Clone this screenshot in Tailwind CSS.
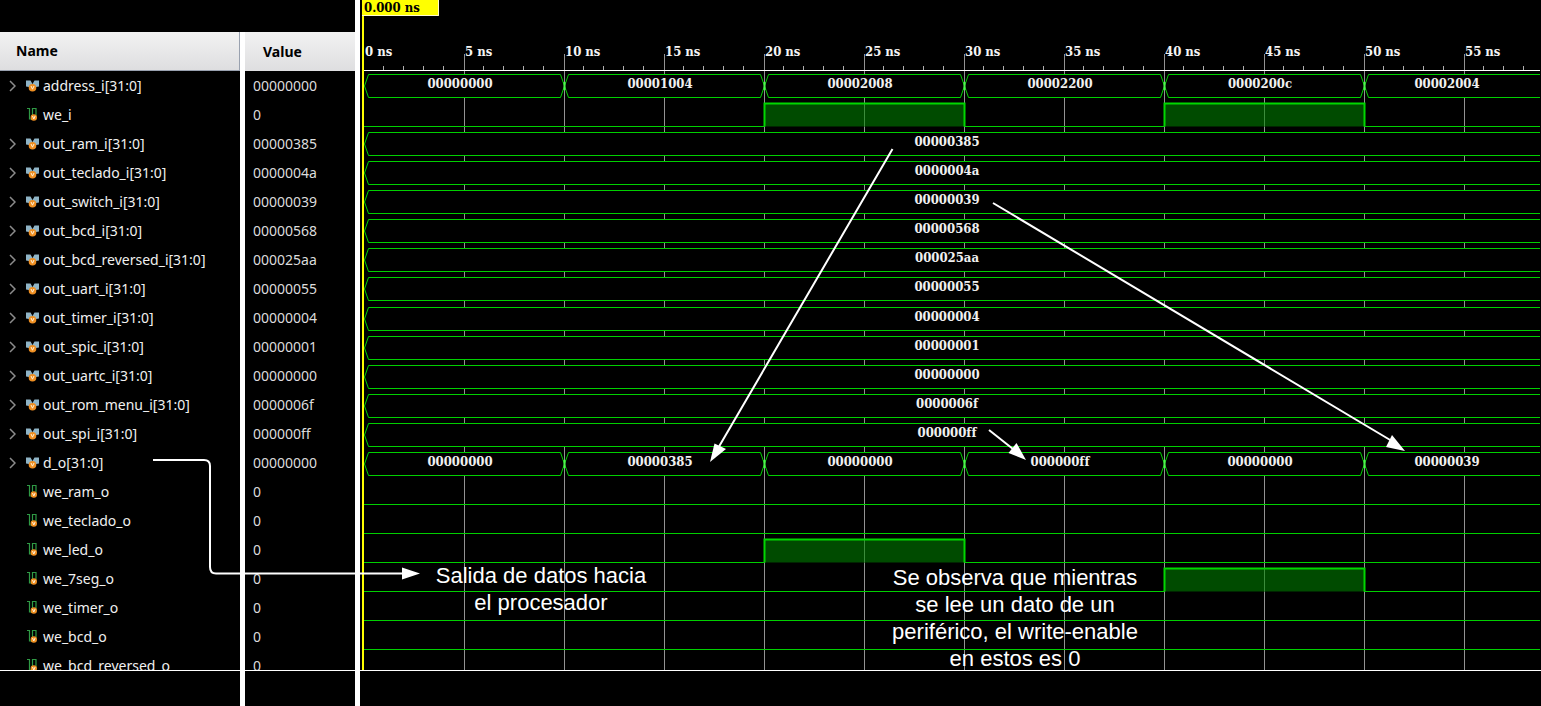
<!DOCTYPE html>
<html lang="es">
<head>
<meta charset="utf-8">
<meta name="viewport" content="width=device-width, initial-scale=1">
<title>Waveform</title>
<script src="https://cdn.jsdelivr.net/npm/@tailwindcss/browser@4"></script>
</head>
<body class="bg-black text-white">
<svg class="hidden" aria-hidden="true">
  <symbol id="i-bus" viewBox="0 0 14 12">
    <path d="M0 .5h4.500L6.500 4V7H3L0 6.500zM13 .5H8.500L6.500 4V7H10l3-.5z" fill="#8fb4c6"/>
    <circle cx="6.500" cy="7.700" r="3.800" fill="#ef8f22"/>
    <path d="M5 6l1.500 3.200L8 6" fill="none" stroke="#fff3da" stroke-width="1"/>
  </symbol>
  <symbol id="i-bit" viewBox="0 0 14 13">
    <path d="M1 .5h2.500v10.500h3M6.500 8V.5h3.500v7" fill="none" stroke="#2f9a45" stroke-width="1.200"/>
    <circle cx="7.800" cy="9.500" r="3.200" fill="#ef8f22"/>
    <path d="M6.500 8l1.300 3L9.100 8" fill="none" stroke="#fff3da" stroke-width="1"/>
  </symbol>
</svg>

<main class="relative flex h-screen min-h-[706px] flex-col overflow-hidden">
  <div class="flex h-[671px] border-b border-white">
    <section class="w-[360px] shrink-0 overflow-hidden border-r-[5px] border-white pt-8 font-['Noto_Sans','Open_Sans',sans-serif]">
      <table class="w-full table-fixed border-separate border-spacing-0 text-sm">
        <thead>
          <tr class="h-[39px] text-left text-black">
            <th scope="col" class="w-[240px] border-r border-b border-gray-400 bg-linear-to-b from-[#f2f2f2] to-[#dedee0] p-0 pl-4 font-bold">Name</th>
            <th scope="col" class="border-l-[5px] border-white bg-linear-to-b from-[#f2f2f2] to-[#dedee0] p-0 pl-[18px] font-bold">Value</th>
          </tr>
        </thead>
        <tbody id="signals"></tbody>
      </table>
    </section>
    <section class="relative min-w-0 flex-1 overflow-hidden">
      <svg id="wave" class="block h-full w-full text-[13px] font-bold font-['DejaVu_Serif_Condensed','DejaVu_Serif',serif]" role="img" aria-label="Formas de onda"></svg>
    </section>
  </div>
  <div class="flex flex-1">
    <div class="w-[240px]"></div>
    <div class="w-[120px] border-x-[5px] border-white"></div>
  </div>

  <svg class="pointer-events-none absolute inset-0 h-full w-full" fill="none" stroke="#fff" stroke-width="2" aria-hidden="true">
    <path d="M153 460H204Q210 460 210 466V567Q210 573.500 216 573.500H403"/>
    <path d="M892.500 149L717 450M993 203L1391 440.500M989 430L1013 449"/>
    <g fill="#fff" stroke="none">
      <path d="M402 567.500L420 573.500L402 579.500z"/>
      <path d="M710 462L714.500 443.500L726 449z"/>
      <path d="M1405 451L1386 447L1392 435z"/>
      <path d="M1026 460L1008.500 453L1016.500 443z"/>
    </g>
  </svg>
  <p class="absolute top-[562px] left-[421px] w-60 text-center text-[22px] leading-[27px] font-['Liberation_Sans',sans-serif]">Salida de datos hacia<br>el procesador</p>
  <p class="absolute top-[564px] left-[885px] w-[260px] text-center text-[22px] leading-[27px] font-['Liberation_Sans',sans-serif]">Se observa que mientras<br>se lee un dato de un<br>periférico, el write-enable<br>en estos es 0</p>
</main>

<script>
const signals = [
  ['address_i[31:0]', '00000000', ['00000000', '00001004', '00002008', '00002200', '0000200c', '00002004']],
  ['we_i', '0', [2, 4]],
  ['out_ram_i[31:0]', '00000385', ['00000385']],
  ['out_teclado_i[31:0]', '0000004a', ['0000004a']],
  ['out_switch_i[31:0]', '00000039', ['00000039']],
  ['out_bcd_i[31:0]', '00000568', ['00000568']],
  ['out_bcd_reversed_i[31:0]', '000025aa', ['000025aa']],
  ['out_uart_i[31:0]', '00000055', ['00000055']],
  ['out_timer_i[31:0]', '00000004', ['00000004']],
  ['out_spic_i[31:0]', '00000001', ['00000001']],
  ['out_uartc_i[31:0]', '00000000', ['00000000']],
  ['out_rom_menu_i[31:0]', '0000006f', ['0000006f']],
  ['out_spi_i[31:0]', '000000ff', ['000000ff']],
  ['d_o[31:0]', '00000000', ['00000000', '00000385', '00000000', '000000ff', '00000000', '00000039']],
  ['we_ram_o', '0', []],
  ['we_teclado_o', '0', []],
  ['we_led_o', '0', [2]],
  ['we_7seg_o', '0', [4]],
  ['we_timer_o', '0', []],
  ['we_bcd_o', '0', []],
  ['we_bcd_reversed_o', '0', []],
];
const isBus = s => s[0].includes('[');

document.getElementById('signals').innerHTML = signals.map(s => `
  <tr class="h-[29px] text-[#f0f0f0]">
    <td class="p-0"><div class="flex h-[29px] items-center">
      ${isBus(s)
        ? `<button type="button" aria-label="Expandir ${s[0]}" class="ml-2 flex w-[18px] shrink-0"><svg class="h-3 w-2" viewBox="0 0 8 12" fill="none" stroke="#8c8c8c" stroke-width="1.500"><path d="M2 1l5 5-5 5"/></svg></button><svg class="h-3 w-[14px] shrink-0"><use href="#i-bus"/></svg>`
        : `<span class="ml-2 w-[18px] shrink-0"></span><svg class="h-[13px] w-[14px] shrink-0"><use href="#i-bit"/></svg>`}
      <span class="ml-[3px] whitespace-nowrap">${s[0]}</span></div></td>
    <td class="border-l-[5px] border-white p-0 pl-2 text-[#dcdcdc]">${s[1]}</td>
  </tr>`).join('');

const wave = document.getElementById('wave');
const START = 4, STEP = 100;
function draw() {
  const W = wave.getBoundingClientRect().width, end = W - 1;
  let grid = '', o = '';
  for (let x = START, k = 0; x < end; x += 20, k++) {
    if (k % 5) grid += `<path d="M${x - .5} 66v4" stroke="#b0b0b0"/>`;
    else {
      if (k) grid += `<path d="M${x + .5} 54V670" stroke="#929292"/>`;
      grid += `<text x="${x + 1}" y="56" fill="#f4f4f4">${k} ns</text>`;
    }
  }
  o += `<path d="M${START} 70.5H${end}" stroke="#fff"/>`;
  signals.forEach((s, i) => {
    const t = Math.round(74 + i * 29.07) + .5, b = t + 23, m = t + 11.5;
    if (isBus(s)) {
      s[2].forEach((v, n) => {
        const x0 = START + .5 + n * 2 * STEP, last = n === s[2].length - 1;
        const x1 = last ? end : x0 + 2 * STEP;
        const right = last ? `H${end}V${b}` : `H${x1 - 4}L${x1} ${m}L${x1 - 4} ${b}`;
        o += `<path d="M${x0} ${m}L${x0 + 4} ${t}${right}H${x0 + 4}z" fill="#000"/>`;
        o += last
          ? `<path d="M${end} ${t}H${x0 + 4}L${x0} ${m}L${x0 + 4} ${b}H${end}" fill="none" stroke="#00d000"/>`
          : `<path d="M${x0} ${m}L${x0 + 4} ${t}${right}H${x0 + 4}z" fill="none" stroke="#00d000"/>`;
        if (n) o += `<path d="M${x0} ${m - 4}v8" stroke="#50f050" stroke-width="2"/>`;
        o += `<text x="${Math.round((x0 + x1) / 2) - 5}" y="${Math.round(t + 13)}" text-anchor="middle" fill="#f0f0f0">${v}</text>`;
      });
    } else if (b < 670) {
      let d = `M${START} ${b}`;
      s[2].forEach(n => {
        const x0 = START + .5 + n * 2 * STEP;
        o += `<rect x="${x0}" y="${t}" width="200" height="23" fill="#004b00"/><path d="M${x0 + 100} ${t}v23" stroke="#3c8c3c"/>`;
        o += `<path d="M${x0} ${b}V${t}h200V${b}" fill="none" stroke="#00d800" stroke-width="2"/>`;
        d += `H${x0}M${x0 + 200} ${b}`;
      });
      o += `<path d="${d}H${end}" stroke="#00d000"/>`;
    }
  });
  o += `<path d="M3 0V670" stroke="#ffff00" stroke-width="2"/>`;
  o += `<rect x="2" y="0" width="77" height="16" fill="#ffff00"/><path d="M2 15.500h76.500V0" fill="none" stroke="#fffbd0"/>`;
  o += `<text x="4" y="12" fill="#000">0.000 ns</text>`;
  wave.innerHTML = grid + o;
}
new ResizeObserver(draw).observe(wave);
addEventListener('load', draw);
</script>
</body>
</html>
